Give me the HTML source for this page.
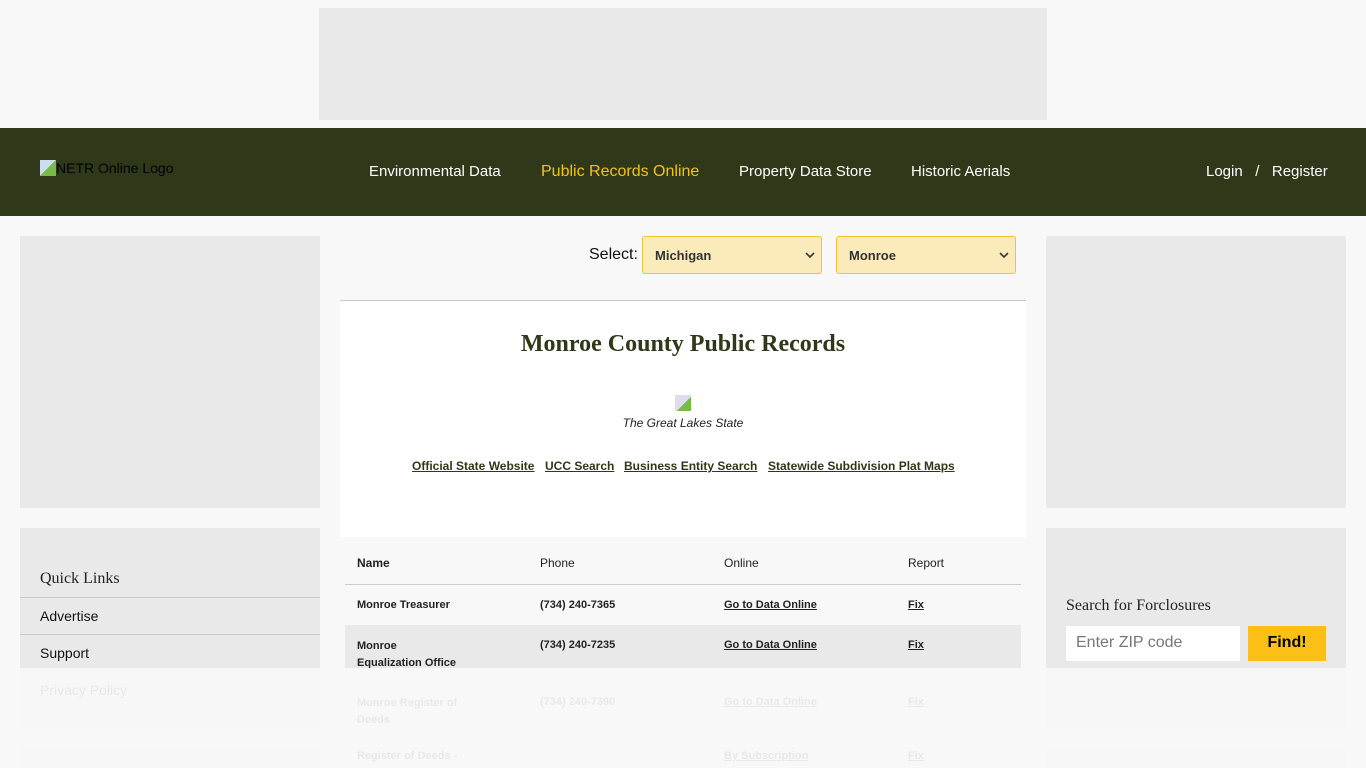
<!DOCTYPE html>
<html style="overflow:hidden;height:768px"><head><meta charset="utf-8"><style>
*{margin:0;padding:0;box-sizing:border-box}
body{width:1366px;height:768px;overflow:hidden;background:#f8f8f8;font-family:"Liberation Sans",Arial,sans-serif;position:relative}
.a{position:absolute}
.hdr{left:0;top:128px;width:1366px;height:88px;background:#2f3819}
.nav{color:#fff;font-size:15px;top:163px}
.sel{height:38px;border:1px solid #f0c430;background:#fbebbb;border-radius:3px;font-size:13px;font-weight:bold;color:#333;padding:11px 12px}
.sel svg{position:absolute;right:6px;top:15px}
.lk{color:#2f3819;font-size:12px;font-weight:bold;text-decoration:underline}
.td{font-size:11px;font-weight:bold;color:#222}
.u{text-decoration:underline}
.ql{left:20px;width:300px;border-top:1px solid #ccc;font-size:14px;padding-left:20px;color:#111}
</style></head><body>
<div class="a" style="left:319px;top:8px;width:728px;height:112px;background:#e9e9e9"></div>
<div class="a hdr"></div>
<div class="a" style="left:40px;top:160px;font-size:14px;color:#000"><span style="display:inline-block;width:16px;height:16px;background:linear-gradient(135deg,#cde 50%,#7b4 50%);vertical-align:-3px"></span>NETR Online Logo</div>
<div class="a nav" style="left:369px">Environmental Data</div>
<div class="a nav" style="left:541px;color:#f5c21b;font-size:16px">Public Records Online</div>
<div class="a nav" style="left:739px">Property Data Store</div>
<div class="a nav" style="left:911px">Historic Aerials</div>
<div class="a nav" style="left:1206px">Login &nbsp;&nbsp;/&nbsp;&nbsp; Register</div>

<div class="a" style="left:20px;top:236px;width:300px;height:272px;background:#e9e9e9"></div>
<div class="a" style="left:1046px;top:236px;width:300px;height:272px;background:#e9e9e9"></div>
<div class="a" style="left:20px;top:528px;width:300px;height:200px;background:#e9e9e9"></div>
<div class="a" style="left:1046px;top:528px;width:300px;height:200px;background:#e9e9e9"></div>
<div class="a" style="left:20px;top:748px;width:300px;height:20px;background:#e9e9e9"></div>
<div class="a" style="left:1046px;top:748px;width:300px;height:20px;background:#e9e9e9"></div>
<div class="a" style="left:40px;top:570px;font-family:'Liberation Serif',serif;font-size:16px;color:#222">Quick Links</div>
<div class="a ql" style="top:597px;height:37px;padding-top:10px">Advertise</div>
<div class="a ql" style="top:634px;height:37px;padding-top:10px">Support</div>
<div class="a" style="left:40px;top:682px;font-size:14px;color:#111">Privacy Policy</div>

<div class="a" style="left:1066px;top:597px;font-family:'Liberation Serif',serif;font-size:16px;color:#222">Search for Forclosures</div>
<div class="a" style="left:1066px;top:626px;width:174px;height:35px;background:#fff;padding:8px 10px;font-size:16px;color:#777">Enter ZIP code</div>
<div class="a" style="left:1248px;top:626px;width:78px;height:35px;background:#fbbf16;font-size:16px;font-weight:bold;text-align:center;padding-top:8px">Find!</div>

<div class="a" style="left:589px;top:246px;font-size:16px;color:#111">Select:</div>
<div class="a sel" style="left:642px;top:236px;width:180px">Michigan<svg width="10" height="7" viewBox="0 0 10 7"><path d="M1 1l4 4 4-4" stroke="#333" stroke-width="1.6" fill="none"/></svg></div>
<div class="a sel" style="left:836px;top:236px;width:180px">Monroe<svg width="10" height="7" viewBox="0 0 10 7"><path d="M1 1l4 4 4-4" stroke="#333" stroke-width="1.6" fill="none"/></svg></div>
<div class="a" style="left:340px;top:300px;width:686px;height:237px;background:#fff;border-top:1px solid #ccc"></div>
<div class="a" style="left:340px;top:331px;width:686px;text-align:center;font-family:'Liberation Serif',serif;font-weight:bold;font-size:24px;color:#2f3819">Monroe County Public Records</div>
<div class="a" style="left:675px;top:395px;width:16px;height:16px;background:linear-gradient(135deg,#dde 55%,#7b4 55%)"></div>
<div class="a" style="left:340px;top:416px;width:686px;text-align:center;font-style:italic;font-size:12px;color:#222">The Great Lakes State</div>
<div class="a lk" style="left:412px;top:459px">Official State Website</div>
<div class="a lk" style="left:545px;top:459px">UCC Search</div>
<div class="a lk" style="left:624px;top:459px">Business Entity Search</div>
<div class="a lk" style="left:768px;top:459px">Statewide Subdivision Plat Maps</div>

<div class="a" style="left:345px;top:584px;width:676px;border-top:1px solid #ccc"></div>
<div class="a td" style="left:357px;top:556px;font-size:12px">Name</div>
<div class="a td" style="left:540px;top:556px;font-size:12px;font-weight:normal">Phone</div>
<div class="a td" style="left:724px;top:556px;font-size:12px;font-weight:normal">Online</div>
<div class="a td" style="left:908px;top:556px;font-size:12px;font-weight:normal">Report</div>
<div class="a td" style="left:357px;top:599px">Monroe Treasurer</div>
<div class="a td" style="left:540px;top:599px">(734) 240-7365</div>
<div class="a td u" style="left:724px;top:599px">Go to Data Online</div>
<div class="a td u" style="left:908px;top:599px">Fix</div>
<div class="a" style="left:345px;top:625px;width:676px;height:43px;background:#e9e9e9"></div>
<div class="a td" style="left:357px;top:638px;line-height:17px">Monroe<br>Equalization Office</div>
<div class="a td" style="left:540px;top:639px">(734) 240-7235</div>
<div class="a td u" style="left:724px;top:639px">Go to Data Online</div>
<div class="a td u" style="left:908px;top:639px">Fix</div>
<div class="a td" style="left:357px;top:695px;line-height:17px">Monroe Register of<br>Deeds</div>
<div class="a td" style="left:540px;top:696px">(734) 240-7390</div>
<div class="a td u" style="left:724px;top:696px">Go to Data Online</div>
<div class="a td u" style="left:908px;top:696px">Fix</div>
<div class="a td" style="left:357px;top:750px">Register of Deeds -</div>
<div class="a td u" style="left:724px;top:750px">By Subscription</div>
<div class="a td u" style="left:908px;top:750px">Fix</div>
<div class="a" style="left:0;top:668px;width:1366px;height:100px;background:rgba(248,248,248,0.93)"></div>
</body></html>
